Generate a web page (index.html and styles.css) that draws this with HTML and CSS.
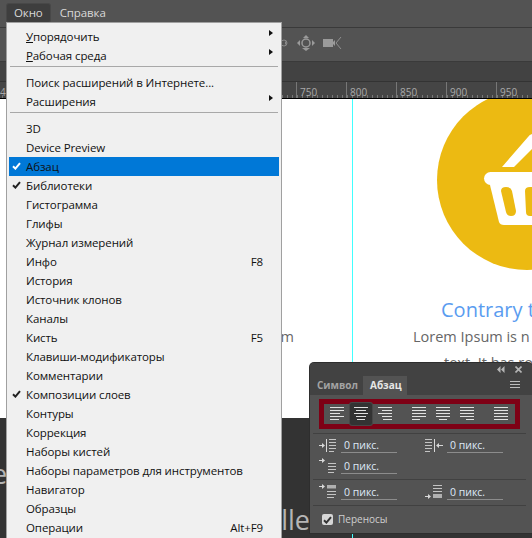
FILE: index.html
```html
<!DOCTYPE html>
<html lang="ru">
<head>
  <meta charset="UTF-8">
  <title>Окно</title>
  <link rel="stylesheet" href="styles.css">
</head>
<body>

  <!-- Icon set -->
  <svg class="defs">
    <symbol id="check" viewBox="0 0 9 8"><path d="M1 4.2 L3.4 6.6 L8 1.2" fill="none" stroke="currentColor" stroke-width="2"/></symbol>
    <symbol id="al-left" viewBox="0 0 14 14"><path d="M0 .5h14M0 3.5h14M0 6.5h10M0 9.5h14M0 12.5h9" stroke="currentColor"/></symbol>
    <symbol id="al-center" viewBox="0 0 14 14"><path d="M0 .5h14M2 3.5h10M0 6.5h14M2 9.5h10M3 12.5h8" stroke="currentColor"/></symbol>
    <symbol id="al-right" viewBox="0 0 14 14"><path d="M0 .5h14M4 3.5h10M0 6.5h14M4 9.5h10M5 12.5h9" stroke="currentColor"/></symbol>
    <symbol id="ju-left" viewBox="0 0 14 14"><path d="M0 .5h14M0 3.5h14M0 6.5h14M0 9.5h14M0 12.5h8" stroke="currentColor"/></symbol>
    <symbol id="ju-center" viewBox="0 0 14 14"><path d="M0 .5h14M0 3.5h14M0 6.5h14M0 9.5h14M3 12.5h8" stroke="currentColor"/></symbol>
    <symbol id="ju-right" viewBox="0 0 14 14"><path d="M0 .5h14M0 3.5h14M0 6.5h14M0 9.5h14M6 12.5h8" stroke="currentColor"/></symbol>
    <symbol id="ju-all" viewBox="0 0 14 14"><path d="M0 .5h14M0 3.5h14M0 6.5h14M0 9.5h14M0 12.5h14" stroke="currentColor"/></symbol>
    <symbol id="in-left" viewBox="0 0 18 16"><path d="M0 8.5h4" stroke="currentColor"/><path d="M3 6l3 2.5-3 2.5z" fill="currentColor"/><path d="M7.5 2v13" stroke="currentColor"/><path d="M10 2.5h7M10 5.5h7M10 8.5h7M10 11.5h7M10 14.5h5" stroke="currentColor" opacity=".85"/></symbol>
    <symbol id="in-right" viewBox="0 0 18 16"><path d="M0 2.5h7M0 5.5h7M0 8.5h7M0 11.5h7M0 14.5h5" stroke="currentColor" opacity=".85"/><path d="M9.5 2v13" stroke="currentColor"/><path d="M13 8.5h5" stroke="currentColor"/><path d="M14 6l-3 2.5 3 2.5z" fill="currentColor"/></symbol>
    <symbol id="in-first" viewBox="0 0 18 16"><path d="M0 2.5h4" stroke="currentColor"/><path d="M3 0l3 2.5-3 2.5z" fill="currentColor"/><path d="M9 5.5h8M9 8.5h8M9 11.5h8M9 14.5h6" stroke="currentColor" opacity=".85"/></symbol>
    <symbol id="sp-before" viewBox="0 0 18 16"><path d="M0 2.5h4" stroke="currentColor"/><path d="M3 0l3 2.5-3 2.5z" fill="currentColor"/><rect x="8" y="1" width="9" height="3.5" fill="currentColor" opacity=".7"/><path d="M8 7.5h9M8 10.5h9M8 13.5h7" stroke="currentColor" opacity=".85"/></symbol>
    <symbol id="sp-after" viewBox="0 0 18 16"><path d="M8 1.5h9M8 4.5h9M8 7.5h9" stroke="currentColor" opacity=".85"/><rect x="8" y="10" width="9" height="4" fill="currentColor" opacity=".7"/><path d="M0 12.5h4" stroke="currentColor"/><path d="M3 10l3 2.5-3 2.5z" fill="currentColor"/></symbol>
  </svg>

  <div class="app">
    <div class="menubar">
      <span class="menubar-item active">Окно</span>
      <span class="menubar-item">Справка</span>
    </div>

    <div class="optionsbar">
      <svg class="opt-icons" width="70" height="24" viewBox="0 0 70 24">
        <!-- transform, move and camera tools, dimmed -->
        <circle cx="5" cy="12" r="3" fill="none" stroke="#8a8a8a"/>
        <path d="M8 12l-2-2v4z" fill="#8a8a8a"/>
        <circle cx="27" cy="12" r="4" fill="none" stroke="#9a9a9a" stroke-width="1.500"/>
        <g fill="#9a9a9a">
          <path d="M18 12l3-3v6z"/>
          <path d="M36 12l-3-3v6z"/>
          <path d="M27 4l-3 3h6z"/>
          <path d="M27 20l-4-3h8z"/>
          <rect x="44" y="8" width="10" height="8"/>
          <path d="M54 11l2-2v6l-2-2z"/>
        </g>
        <path d="M62 6l-5 6 5 6" fill="none" stroke="#8f8f8f"/>
      </svg>
    </div>

    <div class="tabbar"></div>

    <div class="ruler">
      <span class="ruler-cell">4</span>
      <span class="ruler-cell"></span>
      <span class="ruler-cell"></span>
      <span class="ruler-cell"></span>
      <span class="ruler-cell"></span>
      <span class="ruler-cell"></span>
      <span class="ruler-cell">750</span>
      <span class="ruler-cell">800</span>
      <span class="ruler-cell">850</span>
      <span class="ruler-cell">900</span>
      <span class="ruler-cell">950</span>
    </div>

    <div class="canvas">
      <div class="doc-white"></div>
      <div class="doc-dark"></div>

      <div class="circle"></div>
      <svg class="basket" width="62" height="100" viewBox="0 0 62 100">
        <path d="M32 42 L58 12 Q61 8 66 9 L66 20 L44 42 Z" fill="#fff"/>
        <rect x="14" y="47" width="60" height="13" rx="6.500" fill="#fff"/>
        <path d="M19 56 L29 97 Q30 100 34 100 L70 100 L70 56 Z" fill="#fff"/>
        <path d="M31 66 Q31 62 36 62 Q41 62 42 66 L46 86 Q46 91 41 91 Q37 91 36 87 Z" fill="#ecba12"/>
        <path d="M55 66 Q55 62 60 62 L70 62 L70 91 L60 91 Q56 91 56 87 Z" fill="#ecba12"/>
      </svg>

      <div class="doc-title">Contrary t</div>
      <div class="doc-text first">Lorem Ipsum is n</div>
      <div class="doc-text second">text. It has ro</div>
      <div class="doc-text side">m</div>
      <div class="doc-foot left">e</div>
      <div class="doc-foot right">lle</div>

      <div class="guide"></div>
    </div>
  </div>

  <div class="menu">
    <div class="menu-row has-sub"><span><u>У</u>порядочить</span></div>
    <div class="menu-row has-sub"><span><u>Р</u>абочая среда</span></div>
    <div class="menu-sep"></div>
    <div class="menu-row"><span>Поиск расширений в Интернете...</span></div>
    <div class="menu-row has-sub"><span>Расширения</span></div>
    <div class="menu-sep"></div>
    <div class="menu-row"><span>3D</span></div>
    <div class="menu-row"><span>Device Preview</span></div>
    <div class="menu-row selected"><svg class="menu-check"><use href="#check"/></svg><span>Абзац</span></div>
    <div class="menu-row"><svg class="menu-check"><use href="#check"/></svg><span>Библиотеки</span></div>
    <div class="menu-row"><span>Гистограмма</span></div>
    <div class="menu-row"><span>Глифы</span></div>
    <div class="menu-row"><span>Журнал измерений</span></div>
    <div class="menu-row"><span>Инфо</span><span>F8</span></div>
    <div class="menu-row"><span>История</span></div>
    <div class="menu-row"><span>Источник клонов</span></div>
    <div class="menu-row"><span>Каналы</span></div>
    <div class="menu-row"><span>Кисть</span><span>F5</span></div>
    <div class="menu-row"><span>Клавиши-модификаторы</span></div>
    <div class="menu-row"><span>Комментарии</span></div>
    <div class="menu-row"><svg class="menu-check"><use href="#check"/></svg><span>Композиции слоев</span></div>
    <div class="menu-row"><span>Контуры</span></div>
    <div class="menu-row"><span>Коррекция</span></div>
    <div class="menu-row"><span>Наборы кистей</span></div>
    <div class="menu-row"><span>Наборы параметров для инструментов</span></div>
    <div class="menu-row"><span>Навигатор</span></div>
    <div class="menu-row"><span>Образцы</span></div>
    <div class="menu-row"><span>Операции</span><span>Alt+F9</span></div>
  </div>

  <div class="panel">
    <div class="panel-top">
      <svg class="panel-ctl" width="8" height="7" viewBox="0 0 8 7"><path d="M3.500 0v7L0 3.500zM7.500 0v7L4 3.500z" fill="#b5b5b5"/></svg>
      <svg class="panel-ctl" width="7" height="7" viewBox="0 0 7 7"><path d="M.5.5l6 6M6.500.5l-6 6" stroke="#b5b5b5" stroke-width="1.600"/></svg>
    </div>
    <div class="panel-tabs">
      <span class="panel-tab">Символ</span>
      <span class="panel-tab active">Абзац</span>
      <svg class="panel-burger" width="10" height="8" viewBox="0 0 10 8"><path d="M0 .5h10M0 3.500h10M0 6.500h10" stroke="#bdbdbd"/></svg>
    </div>
    <div class="panel-body">
      <div class="align-box">
        <span class="align-btn"><svg><use href="#al-left"/></svg></span>
        <span class="align-btn on"><svg><use href="#al-center"/></svg></span>
        <span class="align-btn"><svg><use href="#al-right"/></svg></span>
        <span class="align-gap"></span>
        <span class="align-btn"><svg><use href="#ju-left"/></svg></span>
        <span class="align-btn"><svg><use href="#ju-center"/></svg></span>
        <span class="align-btn"><svg><use href="#ju-right"/></svg></span>
        <span class="align-gap"></span>
        <span class="align-btn"><svg><use href="#ju-all"/></svg></span>
      </div>

      <div class="field-group first">
        <div class="field"><svg class="field-icon"><use href="#in-left"/></svg><span class="field-value">0 пикс.</span></div>
        <div class="field"><svg class="field-icon"><use href="#in-right"/></svg><span class="field-value">0 пикс.</span></div>
        <div class="field"><svg class="field-icon"><use href="#in-first"/></svg><span class="field-value">0 пикс.</span></div>
      </div>

      <div class="field-group second">
        <div class="field"><svg class="field-icon"><use href="#sp-before"/></svg><span class="field-value">0 пикс.</span></div>
        <div class="field"><svg class="field-icon"><use href="#sp-after"/></svg><span class="field-value">0 пикс.</span></div>
      </div>

      <label class="hyphen">
        <span class="checkbox"><svg width="9" height="8"><use href="#check"/></svg></span>
        Переносы
      </label>
    </div>
  </div>

</body>
</html>
```

FILE: styles.css
```css
html, body {
  margin: 0;
  padding: 0;
  width: 532px;
  height: 538px;
  overflow: hidden;
}

body {
  position: relative;
  font-family: "Open Sans", sans-serif;
  background: #333;
}

.defs {
  width: 0;
  height: 0;
  display: block;
  position: absolute;
}

.app {
  display: flex;
  flex-direction: column;
  height: 538px;
}

/* Top bars */
.menubar {
  height: 23px;
  background: #535353;
  border-bottom: 1px solid #3a3a3a;
  display: flex;
  align-items: flex-start;
  gap: 9px;
  padding: 4px 0 0 7px;
  font-size: 11.5px;
  letter-spacing: -.1px;
  color: #d8d8d8;
}

.menubar-item {
  height: 18px;
  line-height: 18px;
  padding: 0 7px;
  border-radius: 2px;
}

.menubar-item + .menubar-item {
  padding: 0 1px;
}

.menubar-item.active {
  background: #3e3e3e;
  box-shadow: 0 0 0 1px #484848;
}

.optionsbar {
  height: 33px;
  background: #535353;
  border-bottom: 1px solid #3a3a3a;
  padding-left: 279px;
  display: flex;
  align-items: center;
}

.opt-icons {
  display: block;
  margin-top: -3px;
}

.tabbar {
  height: 19px;
  background: #424242;
  border-bottom: 1px solid #333;
}

.ruler {
  height: 16px;
  background:
    repeating-linear-gradient(to right, #777 0, #777 1px, transparent 1px, transparent 5px) 1px bottom / 100% 3px no-repeat,
    #454545;
  display: flex;
  margin-left: -4px;
  width: 560px;
}

.ruler-cell {
  flex: 0 0 50px;
  box-sizing: border-box;
  border-left: 1px solid #777;
  padding-left: 3px;
  font-size: 10px;
  line-height: 20px;
  color: #a9a9a9;
}

/* Document */
.canvas {
  flex: 1;
  position: relative;
  overflow: hidden;
  border-top: 1px solid #000;
  display: flex;
  flex-direction: column;
}

.doc-white {
  height: 319px;
  background: #fff;
}

.doc-dark {
  flex: 1;
  background: #333;
}

.circle {
  position: absolute;
  left: 437px;
  top: -9px;
  width: 180px;
  height: 180px;
  border-radius: 50%;
  background: #ecba12;
}

.basket {
  position: absolute;
  left: 470px;
  top: 26px;
}

.doc-title {
  position: absolute;
  left: 441px;
  top: 197px;
  font-size: 20px;
  line-height: 28px;
  color: #5a9cf0;
  white-space: nowrap;
}

.doc-text {
  position: absolute;
  font-size: 14.5px;
  line-height: 20px;
  color: #666;
  white-space: nowrap;
}

.doc-text.first {
  left: 413px;
  top: 228px;
}

.doc-text.second {
  left: 444px;
  top: 254px;
}

.doc-text.side {
  right: 238px;
  top: 228px;
}

.doc-foot {
  position: absolute;
  font-size: 27px;
  line-height: 36px;
  color: #b5b5b5;
  white-space: nowrap;
}

.doc-foot.left {
  left: -8px;
  top: 357px;
}

.doc-foot.right {
  right: 222px;
  top: 403px;
}

.guide {
  position: absolute;
  left: 352px;
  top: 0;
  bottom: 0;
  width: 1px;
  background: #40ffff;
}

/* Window menu */
.menu {
  position: absolute;
  left: 6px;
  top: 22px;
  width: 276px;
  height: 530px;
  box-sizing: border-box;
  padding: 4px 2px 0;
  background: #f0f0f0;
  border: 1px solid #a0a0a0;
  font-size: 11.5px;
  letter-spacing: -.1px;
  color: #111;
}

.menu-row {
  position: relative;
  height: 19px;
  line-height: 19px;
  padding: 0 16px 0 17px;
  display: flex;
  justify-content: space-between;
}

.menu-row.selected {
  background: #0078d7;
}

.menu-row.has-sub::after {
  content: "";
  position: absolute;
  right: 6px;
  top: 3px;
  border-left: 4px solid #111;
  border-top: 3.5px solid transparent;
  border-bottom: 3.5px solid transparent;
}

.menu-sep {
  height: 1px;
  margin: 1px 1px 6px;
  background: #a8a8a8;
}

.menu-check {
  position: absolute;
  left: 3px;
  top: 5px;
  width: 9px;
  height: 8px;
  color: #222;
}

.menu-row.selected .menu-check {
  color: #fff;
}

/* Paragraph panel */
.panel {
  position: absolute;
  left: 310px;
  top: 363px;
  width: 222px;
  height: 170px;
  background: #535353;
  border-radius: 4px 4px 0 0;
  box-shadow: 0 0 0 1px #2e2e2e;
  color: #d0d0d0;
  font-size: 11px;
}

.panel-top {
  height: 13px;
  background: #424242;
  border-radius: 4px 4px 0 0;
  display: flex;
  justify-content: flex-end;
  align-items: center;
  gap: 10px;
  padding-right: 10px;
}

.panel-ctl {
  display: block;
}

.panel-tabs {
  height: 19px;
  background: #424242;
  display: flex;
  align-items: stretch;
  position: relative;
  font-size: 10px;
  font-weight: 700;
  line-height: 19px;
}

.panel-tab {
  padding: 0 7px;
  color: #a3a3a3;
  width: 39px;
}

.panel-tab.active {
  background: #535353;
  color: #e6e6e6;
  width: 30px;
}

.panel-burger {
  position: absolute;
  right: 12px;
  top: 5px;
}

.panel-body {
  padding: 4px 0 0;
}

.align-box {
  margin-left: 9px;
  width: 201px;
  height: 30px;
  box-sizing: border-box;
  border: 5px solid #7e0015;
  display: flex;
  align-items: center;
  padding-left: 2px;
  gap: 2px;
}

.align-btn {
  width: 22px;
  height: 22px;
  flex: none;
  display: flex;
  align-items: center;
  justify-content: center;
  border-radius: 2px;
  color: #e2e2e2;
}

.align-btn svg {
  width: 14px;
  height: 14px;
}

.align-btn.on {
  background: #333;
  box-shadow: 0 0 0 1px #474747;
}

.align-gap {
  width: 8px;
  flex: none;
}

.field-group {
  display: grid;
  grid-template-columns: 106px 106px;
  border-bottom: 1px solid #414141;
  margin: 0 6px 0 3px;
  padding: 4px 0 5px 6px;
}

.field-group.first {
  border-top: 1px solid #414141;
  margin-top: 4px;
  padding-top: 3px;
  row-gap: 5px;
}

.field {
  display: flex;
  align-items: center;
  gap: 4px;
  height: 16px;
}

.field-icon {
  width: 18px;
  height: 16px;
  flex: none;
  color: #d8d8d8;
}

.field-value {
  width: 56px;
  height: 16px;
  line-height: 14px;
  padding: 1px 0 0 3px;
  box-sizing: border-box;
  border-bottom: 1px solid #8c8c8c;
  color: #dfe9f7;
  font-size: 10.5px;
}

.hyphen {
  display: flex;
  align-items: center;
  gap: 5px;
  line-height: 15px;
  margin: 6px 0 0 12px;
  color: #cfcfcf;
  font-size: 10px;
}

.checkbox {
  width: 11px;
  height: 11px;
  background: #d6d6d6;
  border-radius: 2px;
  color: #333;
  display: flex;
  align-items: center;
  justify-content: center;
}
```
